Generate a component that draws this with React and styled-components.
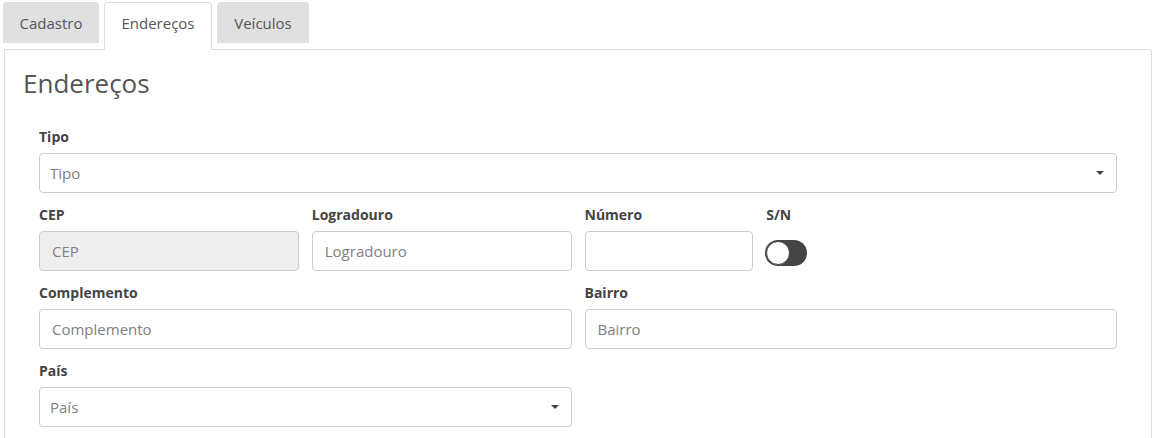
import React, { useState } from 'react';
import styled, { createGlobalStyle } from 'styled-components';

const GlobalStyle = createGlobalStyle`
  * { box-sizing: border-box; }
  body {
    margin: 0;
    background: #fff;
    font-family: "Open Sans", "Liberation Sans", sans-serif;
    color: #333;
  }
`;

const Page = styled.div`
  padding: 2px 3px 0 3px;
`;

const TabBar = styled.div`
  display: flex;
  align-items: flex-start;
  gap: 5px;
  height: 47px;
`;

const Tab = styled.button`
  font-family: inherit;
  font-size: 15px;
  color: #555;
  border: 1px solid ${p => (p.active ? '#ddd' : 'transparent')};
  border-bottom: none;
  border-radius: 4px 4px 0 0;
  background: ${p => (p.active ? '#fff' : '#e0e0e0')};
  height: ${p => (p.active ? '48px' : '41px')};
  width: ${p => p.w}px;
  padding: 0;
  position: relative;
  z-index: ${p => (p.active ? 2 : 0)};
  cursor: pointer;
  padding-bottom: ${p => (p.active ? '7px' : '0')};
`;

const Panel = styled.div`
  border: 1px solid #ddd;
  border-bottom: none;
  border-radius: 0 4px 0 0;
  margin-left: 1px;
  padding: 17px 34px 0 18px;
  height: 389px;
`;

const Title = styled.h2`
  margin: 0 0 28px;
  font-size: 26px;
  font-weight: 400;
  color: #555;
  line-height: 32px;
`;

const Form = styled.div`
  display: grid;
  grid-template-columns: repeat(12, 1fr);
  column-gap: 13px;
  padding-left: 16px;
`;

const Field = styled.div`
  grid-column: span ${p => p.span};
  padding-bottom: 12px;
`;

const Label = styled.label`
  display: block;
  font-size: 14px;
  font-weight: 700;
  color: #444;
  line-height: 20px;
  margin-bottom: 6px;
`;

const Input = styled.input`
  display: block;
  width: 100%;
  height: 40px;
  border: 1px solid #ccc;
  border-radius: 4px;
  padding: 0 12px;
  font-family: inherit;
  font-size: 15px;
  color: #555;
  background: ${p => (p.disabled ? '#eee' : '#fff')};
  &::placeholder { color: #808080; }
`;

const SelectBox = styled.div`
  height: 40px;
  border: 1px solid #ccc;
  border-radius: 4px;
  padding: 0 12px 0 10px;
  display: flex;
  align-items: center;
  justify-content: space-between;
  font-size: 15px;
  color: #808080;
  background: #fff;
`;

const Caret = styled.span`
  width: 0;
  height: 0;
  border-left: 4px solid transparent;
  border-right: 4px solid transparent;
  border-top: 4px solid #444;
`;

const Toggle = styled.div`
  width: 42px;
  height: 26px;
  border-radius: 13px;
  background: #444;
  margin-top: 15px;
  margin-left: -1px;
  padding: 1px;
  cursor: pointer;
`;

const Knob = styled.div`
  width: 24px;
  height: 24px;
  border-radius: 50%;
  background: #fff;
  border: 1px solid #444;
  transform: translateX(${p => (p.on ? '16px' : '0')});
`;

function Select({ placeholder }) {
  return (
    <SelectBox>
      <span>{placeholder}</span>
      <Caret />
    </SelectBox>
  );
}

export default function App() {
  const [on, setOn] = useState(false);
  return (
    <Page>
      <GlobalStyle />
      <TabBar>
        <Tab w={96}>Cadastro</Tab>
        <Tab active w={108}>Endereços</Tab>
        <Tab w={92}>Veículos</Tab>
      </TabBar>
      <Panel>
        <Title>Endereços</Title>
        <Form>
          <Field span={12}>
            <Label>Tipo</Label>
            <Select placeholder="Tipo" />
          </Field>
          <Field span={3}>
            <Label>CEP</Label>
            <Input placeholder="CEP" disabled />
          </Field>
          <Field span={3}>
            <Label>Logradouro</Label>
            <Input placeholder="Logradouro" />
          </Field>
          <Field span={2}>
            <Label>Número</Label>
            <Input />
          </Field>
          <Field span={4}>
            <Label>S/N</Label>
            <Toggle onClick={() => setOn(!on)}>
              <Knob on={on} />
            </Toggle>
          </Field>
          <Field span={6}>
            <Label>Complemento</Label>
            <Input placeholder="Complemento" />
          </Field>
          <Field span={6}>
            <Label>Bairro</Label>
            <Input placeholder="Bairro" />
          </Field>
          <Field span={6}>
            <Label>País</Label>
            <Select placeholder="País" />
          </Field>
        </Form>
      </Panel>
    </Page>
  );
}
